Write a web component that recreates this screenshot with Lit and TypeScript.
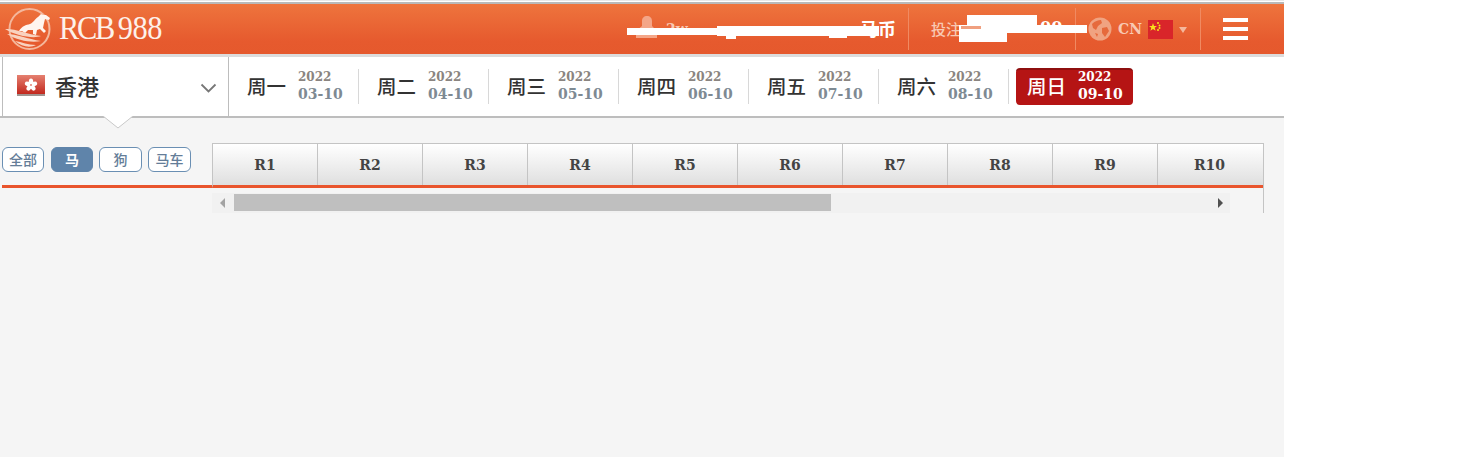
import { LitElement, html, css } from "lit";
import { customElement } from "lit/decorators.js";

const days = [
  ["周一", "03-10"], ["周二", "04-10"], ["周三", "05-10"], ["周四", "06-10"],
  ["周五", "07-10"], ["周六", "08-10"],
];
const races = ["R1","R2","R3","R4","R5","R6","R7","R8","R9","R10"];

@customElement("app-root")
export class AppRoot extends LitElement {
  static styles = css`
    :host { display: block; width: 1484px; height: 457px; background: #fff; overflow: hidden; font-family: "DejaVu Serif","Noto Sans CJK SC",serif; }
    .page { width: 1284px; height: 457px; background: #f5f5f5; display: flex; flex-direction: column; }
    .topline { height: 4px; box-sizing: border-box; background: #fff; border-top: 1px solid #e8e8e8; border-bottom: 2px solid #b9b9b9; }
    .header { height: 50px; position: relative; display: flex; align-items: center; background: linear-gradient(#ee743d, #e65a2e 75%, #e5592d); color: #fff; flex: none; }
    .logo { display: flex; align-items: center; margin-left: 2px; width: 599px; flex: none; }
    .logotext { font-family: "Liberation Serif", serif; font-size: 33px; color: #fdf1ea; margin-left: 5px; letter-spacing: -2.4px; line-height: 50px; margin-top: -2px; transform: scaleX(0.92); transform-origin: left center; }
    .logotext span { margin-left: 5px; letter-spacing: -0.4px; }
    .user { width: 308px; flex: none; box-sizing: border-box; display: flex; align-items: center; padding-left: 34px; border-right: 1px solid #f08a62; height: 42px; font-size: 15px; position: relative; }
    .user .name { margin-left: 7px; color: #f8c9b3; font-weight: bold; font-size: 14px; }
    .user .coin { position: absolute; right: 12px; top: 10px; font-weight: bold; font-size: 18px; font-family: "Noto Sans CJK SC", sans-serif; line-height: 20px; }
    .bet { width: 167px; flex: none; box-sizing: border-box; height: 42px; border-right: 1px solid #f08a62; padding-left: 22px; line-height: 42px; font-size: 15px; color: #f8c9b3; font-family: "Noto Sans CJK SC", sans-serif; font-weight: 500; position: relative; }
    .bet .zeros { position: absolute; left: 131px; top: 10px; line-height: 20px; font-size: 16px; font-weight: bold; color: #fff; font-family: "DejaVu Serif", serif; }
    .lang { width: 125px; flex: none; box-sizing: border-box; height: 42px; border-right: 1px solid #f08a62; display: flex; align-items: center; padding-left: 12px; }
    .lang .cn { font-size: 14px; font-weight: bold; color: #f8c9b3; margin: 0 6px 0 6px; }
    .caret { width: 0; height: 0; border: 4.5px solid transparent; border-top: 6px solid #f5b79c; border-bottom: none; margin-left: 6px; margin-top: 2px; }
    .burger { margin-left: 22px; width: 25px; display: flex; flex-direction: column; gap: 5px; }
    .burger i { display: block; height: 4px; background: #fff; }
    .blot { position: absolute; background: #fff; }
    .blot.pink { background: #f0a080; }

    .nav { height: 64px; box-sizing: border-box; background: #fff; border-top: 3px solid #dcdcdc; border-bottom: 2px solid #bdbdbd; display: flex; align-items: stretch; position: relative; flex: none; }
    .region { width: 227px; flex: none; box-sizing: border-box; margin-left: 2px; border-left: 1px solid #bdbdbd; border-right: 1px solid #bdbdbd; display: flex; align-items: center; padding: 0 0 3px 14px; position: relative; font-family: "Noto Sans CJK SC", sans-serif; font-weight: 500; color: #333; font-size: 22px; }
    .region .txt { margin-left: 9px; }
    .chev { position: absolute; right: 11px; top: 26px; }
    .notch { position: absolute; left: 103px; top: 59px; width: 30px; height: 13px; }
    .day { width: 130px; flex: none; box-sizing: border-box; display: flex; align-items: center; padding-left: 19px; position: relative; }
    .day.first { width: 129px; padding-left: 18px; }
    .day + .day::before { content: ""; position: absolute; left: 0; top: 12px; bottom: 12px; width: 1px; background: #d8d8d8; }
    .wk { font-family: "Noto Sans CJK SC", sans-serif; font-size: 19.5px; color: #333; width: 51px; flex: none; line-height: 1; font-weight: 500; margin-top: -2px; }
    .dt { display: flex; flex-direction: column; font-weight: bold; color: #7e8a93; font-size: 14px; line-height: 18px; margin-top: -2px; }
    .dt .y { font-size: 12px; color: #8a8480; line-height: 16px; }
    .sep { width: 1px; background: #d8d8d8; margin: 12px 7px 12px 0; flex: none; }
    .active { margin-top: 11px; width: 117px; height: 37px; box-sizing: border-box; border-radius: 4px; background: #b51414; border-top: 2px solid #8e0f0f; display: flex; align-items: center; padding: 0 0 3px 11px; color: #fff; }
    .active .wk { color: #fff; margin-top: 0; }
    .active .dt { margin-top: 0; }
    .active .dt, .active .dt .y { color: #fff; }

    .body { display: flex; margin-top: 25px; padding-left: 2px; align-items: flex-start; }
    .tabs { width: 210px; flex: none; height: 45px; box-sizing: border-box; display: flex; gap: 6px; padding-top: 4px; border-bottom: 3px solid #e9552d; }
    .tab { width: 42px; height: 25px; box-sizing: border-box; border: 1px solid #6a8fb3; border-radius: 6px; background: #fff; color: #647d98; font-family: "Noto Sans CJK SC", sans-serif; font-size: 14px; font-weight: 500; display: flex; align-items: center; justify-content: center; padding-bottom: 2px; }
    .tab.all { margin-right: 1px; }
    .tab.on { background: #5f84aa; color: #fff; border-color: #5f84aa; font-weight: 700; }
    .tab.wide { width: 43px; }
    .right { width: 1052px; flex: none; display: flex; flex-direction: column; border-right: 1px solid #c4c4c4; height: 70px; box-sizing: border-box; }
    .races { display: flex; height: 45px; box-sizing: border-box; border-top: 1px solid #c4c4c4; border-left: 1px solid #c4c4c4; border-bottom: 3px solid #e9552d; background: linear-gradient(#fff, #dfdfdf); }
    .race { width: 105px; flex: none; box-sizing: border-box; border-right: 1px solid #c4c4c4; display: flex; align-items: center; justify-content: center; font-weight: bold; font-size: 14px; color: #444; padding-top: 1px; }
    .race:last-child { flex: 1; border-right: none; padding-right: 2px; }
    .sb { margin-top: 5px; width: 1018px; height: 20px; background: #f1f1f1; position: relative; }
    .thumb { position: absolute; left: 22px; top: 1px; width: 597px; height: 17px; background: #bfbfbf; }
    .arrow { position: absolute; top: 5px; width: 0; height: 0; border: 5px solid transparent; }
    .arrow.l { left: 8px; border-left: none; border-right: 5px solid #a3a3a3; }
    .arrow.r { right: 7px; border-right: none; border-left: 5px solid #505050; }
  `;

  private logoMark() {
    return html`<svg width="52" height="50" viewBox="0 0 52 50" style="display:block;flex:none">
      <circle cx="27.5" cy="25" r="20" fill="none" stroke="#f4b79c" stroke-width="2"/>
      <path d="M17 27C20 22 24 21 28 20C31 19 33 15 36 13L39 10L41 11L44 11L48 14L47 16L43 15L42 19L41 24L44 27L42 29L38 25L35 26L34 31L31 30L31 26L26 26L23 29L20 27Z" fill="#fff5ef"/>
      <path d="M3 25C12 24 24 30 39 32C32 35 14 32 3 25Z M5 30C14 30 26 35 39 37C30 39 16 37 5 30Z M13 37C20 38 26 41 34 41C28 44 20 43 13 37Z" fill="#f9d2bf"/>
    </svg>`;
  }

  private hkFlag() {
    return html`<svg width="29" height="23" viewBox="0 0 29 23" style="display:block;flex:none">
      <defs><linearGradient id="hk" x1="0" y1="0" x2="0" y2="1"><stop offset="0" stop-color="#e58070"/><stop offset="1" stop-color="#c0241a"/></linearGradient></defs>
      <rect x="0" y="1" width="28" height="20" fill="url(#hk)"/>
      <rect x="0" y="20" width="28" height="2" fill="#a09490"/>
      <g fill="#fff">
        <ellipse cx="14" cy="7.6" rx="2.2" ry="3"/>
        <ellipse cx="14" cy="7.6" rx="2.2" ry="3" transform="rotate(72 14 11)"/>
        <ellipse cx="14" cy="7.6" rx="2.2" ry="3" transform="rotate(144 14 11)"/>
        <ellipse cx="14" cy="7.6" rx="2.2" ry="3" transform="rotate(216 14 11)"/>
        <ellipse cx="14" cy="7.6" rx="2.2" ry="3" transform="rotate(288 14 11)"/>
      </g>
      <circle cx="14" cy="11" r="1" fill="#e58a7c"/>
    </svg>`;
  }

  private globe() {
    return html`<svg width="24" height="24" viewBox="0 0 24 24" style="display:block;flex:none">
      <circle cx="12" cy="12" r="11.5" fill="#f0a381"/>
      <path d="M4 7C7 4 10 3 13 3L14 6L10 9L8 13L5 11Z M14 11L19 10L21 14L17 20L14 16Z M7 16L10 17L9 20Z" fill="#e66a3c"/>
    </svg>`;
  }

  private cnFlag() {
    return html`<svg width="25" height="19" viewBox="0 0 25 19" style="display:block;flex:none">
      <rect width="25" height="19" fill="#d9252a"/>
      <path d="M5 3L6 6L9 6L6.7 7.8L7.6 10.7L5 9L2.4 10.7L3.3 7.8L1 6L4 6Z" fill="#f8e01c"/>
      <circle cx="10" cy="3" r="1" fill="#f8e01c"/><circle cx="11.5" cy="5.5" r="1" fill="#f8e01c"/>
      <circle cx="11.5" cy="8" r="1" fill="#f8e01c"/><circle cx="10" cy="10" r="1" fill="#f8e01c"/>
    </svg>`;
  }

  render() {
    return html`<div class="page">
      <div class="topline"></div>
      <div class="header">
        <div class="logo">${this.logoMark()}<div class="logotext">RCB<span>988</span></div></div>
        <div class="user">
          <svg width="24" height="22" viewBox="0 0 24 22" style="display:block;flex:none;margin-top:-4px">
            <path d="M7 5C7 2 9 0 12 0C15 0 17 2 17 5V10L22 15V22H1V15L7 10Z" fill="#f4a688"/>
          </svg>
          <span class="name">2w</span>
          <span class="coin">马币</span>
          <span class="blot" style="left:26px;top:20px;width:92px;height:7px"></span>
          <span class="blot" style="left:116px;top:18px;width:162px;height:10px"></span>
          <span class="blot" style="left:125px;top:26px;width:10px;height:5px"></span>
          <span class="blot" style="left:228px;top:25px;width:18px;height:5px"></span>
        </div>
        <div class="bet">投注
          <span class="zeros">00</span>
          <span class="blot" style="left:58px;top:7px;width:70px;height:10px"></span>
          <span class="blot" style="left:50px;top:17px;width:48px;height:17px"></span>
          <span class="blot" style="left:98px;top:17px;width:80px;height:8px"></span>
          <span class="blot pink" style="left:52px;top:18px;width:20px;height:3px"></span>
        </div>
        <div class="lang">${this.globe()}<span class="cn">CN</span>${this.cnFlag()}<span class="caret"></span></div>
        <div class="burger"><i></i><i></i><i></i></div>
      </div>
      <div class="nav">
        <div class="region">${this.hkFlag()}<span class="txt">香港</span>
          <svg class="chev" width="17" height="11" viewBox="0 0 17 11"><path d="M1.5 1.5L8.5 8.5L15.5 1.5" fill="none" stroke="#777" stroke-width="1.8"/></svg>
        </div>
        ${days.map(([w, d], i) => html`<div class="day ${i === 0 ? "first" : ""}"><span class="wk">${w}</span><span class="dt"><span class="y">2022</span><span>${d}</span></span></div>`)}
        <div class="sep"></div>
        <div class="active"><span class="wk">周日</span><span class="dt"><span class="y">2022</span><span>09-10</span></span></div>
        <svg class="notch" viewBox="0 0 30 13"><path d="M0 0L15 12L30 0Z" fill="#fff"/><path d="M0 0L15 12L30 0" fill="none" stroke="#c8c8c8"/></svg>
      </div>
      <div class="body">
        <div class="tabs">
          <div class="tab all">全部</div><div class="tab on">马</div><div class="tab wide">狗</div><div class="tab wide">马车</div>
        </div>
        <div class="right">
          <div class="races">${races.map((r) => html`<div class="race">${r}</div>`)}</div>
          <div class="sb"><span class="arrow l"></span><span class="thumb"></span><span class="arrow r"></span></div>
        </div>
      </div>
    </div>`;
  }
}
